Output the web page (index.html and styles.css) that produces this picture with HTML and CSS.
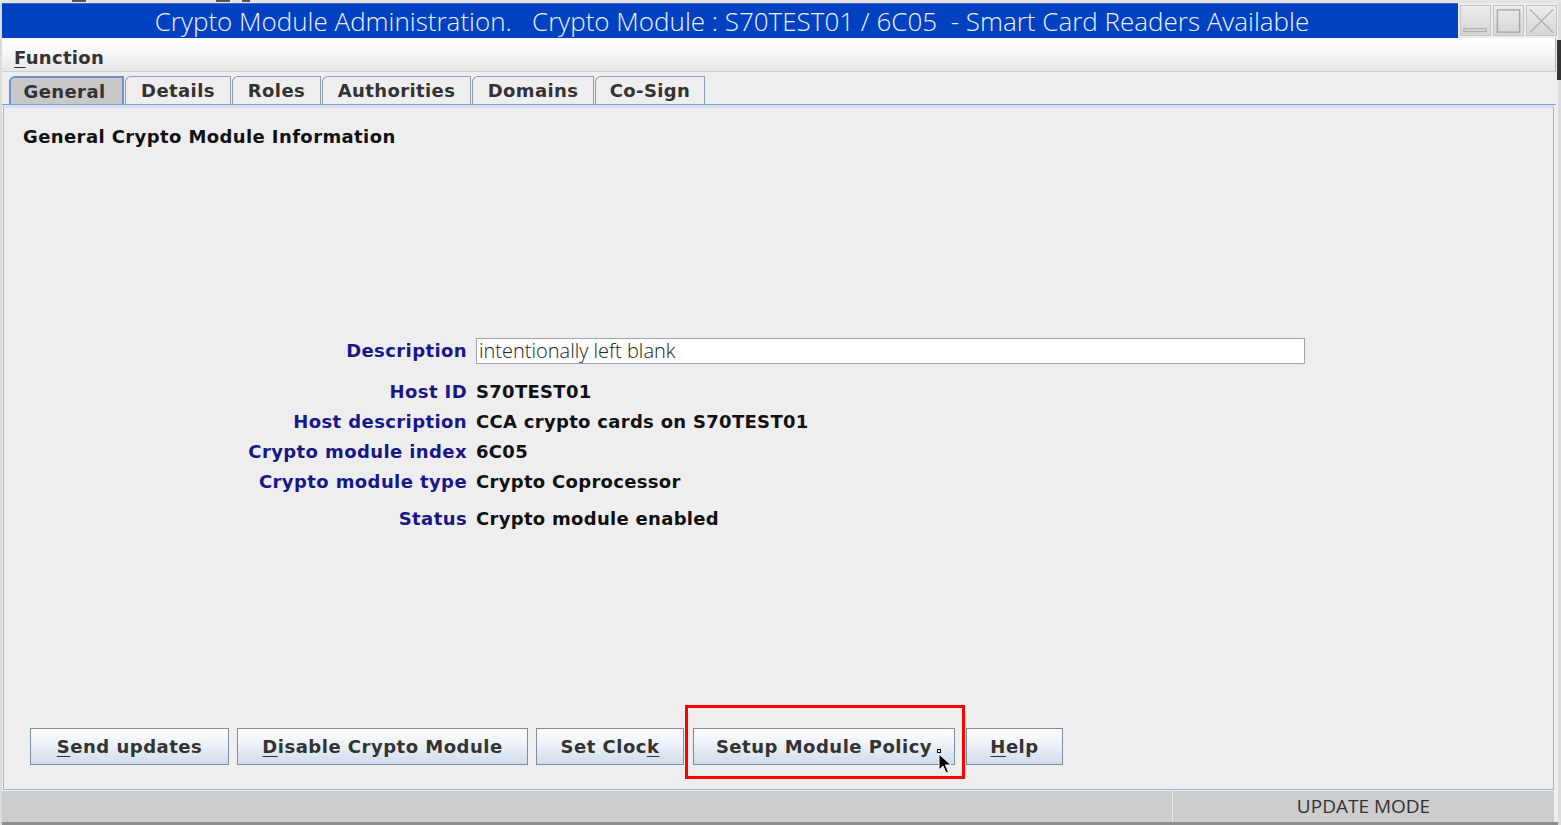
FILE: index.html
```html
<!DOCTYPE html>
<html lang="en">
<head>
<meta charset="utf-8">
<title>Crypto Module Administration</title>
<link rel="stylesheet" href="styles.css">
</head>
<body>
<div class="screen">
  <div class="topstrip"><span class="ghost g1"></span><span class="ghost g2"></span><span class="ghost g3"></span></div>
  <div class="window">
    <div class="titlebar">
      <div class="title">Crypto Module Administration.   Crypto Module : S70TEST01 / 6C05  - Smart Card Readers Available</div>
      <div class="winbtns">
        <span class="winbtn"><svg width="30" height="30" viewBox="0 0 30 30"><rect x="3" y="23" width="23" height="3" fill="none" stroke="#a8a8a8" stroke-width="1"/></svg></span>
        <span class="winbtn"><svg width="30" height="30" viewBox="0 0 30 30"><rect x="3.5" y="3.5" width="23" height="23" fill="none" stroke="#a8a8a8" stroke-width="1.5"/></svg></span>
        <span class="winbtn"><svg width="30" height="30" viewBox="0 0 30 30"><path d="M3 3 L27 27 M27 3 L3 27" stroke="#a8a8a8" stroke-width="1.2" fill="none"/></svg></span>
      </div>
    </div>
    <div class="menubar"><span class="menu"><u>F</u>unction</span></div>
    <div class="tabs">
      <span class="tab selected">General</span>
      <span class="tab">Details</span>
      <span class="tab">Roles</span>
      <span class="tab">Authorities</span>
      <span class="tab">Domains</span>
      <span class="tab">Co-Sign</span>
    </div>
    <div class="panel">
      <h1 class="heading">General Crypto Module Information</h1>
      <div class="form">
        <label class="lbl desc-row">Description</label>
        <div class="val desc-row"><div class="input">intentionally left blank</div></div>
        <span class="lbl">Host ID</span><span class="val">S70TEST01</span>
        <span class="lbl">Host description</span><span class="val">CCA crypto cards on S70TEST01</span>
        <span class="lbl">Crypto module index</span><span class="val">6C05</span>
        <span class="lbl">Crypto module type</span><span class="val">Crypto Coprocessor</span>
        <span class="lbl status-row">Status</span><span class="val status-row">Crypto module enabled</span>
      </div>
      <div class="buttons">
        <button class="btn w-send"><u>S</u>end updates</button>
        <button class="btn w-disable"><u>D</u>isable Crypto Module</button>
        <button class="btn w-clock">Set Cloc<u>k</u></button>
        <span class="highlight-wrap">
          <button class="btn w-policy">Setup Module Policy</button>
          <span class="highlight"></span>
          <svg class="cursor" width="18" height="26" viewBox="0 0 18 26">
            <rect x="0.5" y="0.5" width="3" height="3" fill="#fff" stroke="#000" stroke-width="1"/>
            <path d="M2 5 L2 21 L6 17 L9 24 L11.5 23 L8.5 16 L14 16 Z" fill="#000" stroke="#fff" stroke-width="1"/>
          </svg>
        </span>
        <button class="btn w-help"><u>H</u>elp</button>
      </div>
    </div>
    <div class="statusbar">
      <div class="status-left"></div>
      <div class="status-right">UPDATE MODE</div>
    </div>
  </div>
  <span class="edge"></span>
</div>
</body>
</html>
```
FILE: styles.css
```css
* { box-sizing: border-box; }
html, body { margin: 0; padding: 0; }
body {
  width: 1561px;
  height: 825px;
  overflow: hidden;
  background: #dcdcdc;
  font-family: "DejaVu Sans", "Liberation Sans", sans-serif;
}
.screen {
  position: relative;
  display: flex;
  flex-direction: column;
  height: 825px;
}
.edge {
  position: absolute;
  right: 0;
  top: 40px;
  width: 4px;
  height: 40px;
  background: #333;
}
.topstrip {
  height: 3px;
  background: #e4e4e4;
  display: flex;
}
.ghost { height: 2px; background: #555; }
.g1 { width: 14px; margin-left: 72px; }
.g2 { width: 14px; margin-left: 130px; }
.g3 { width: 8px; margin-left: 12px; }
.window {
  flex: 1;
  display: flex;
  flex-direction: column;
  margin: 0 3px 0 2px;
  border-bottom: 3px solid #8e8e8e;
  background: #eeeeee;
}
.titlebar {
  height: 35px;
  display: flex;
  background: #ececec;
}
.title {
  flex: 1;
  background: #0041c2;
  color: #eef2ff;
  font-family: "Open Sans", "DejaVu Sans", sans-serif;
  font-weight: 300;
  font-size: 26px;
  line-height: 34px;
  text-align: center;
  white-space: pre;
  padding-left: 4px;
  border-top: 1px solid #3a6ad0;
}
.winbtns {
  display: flex;
  gap: 2px;
  padding: 2px 0 0 2px;
  width: 100px;
}
.winbtn {
  width: 31px;
  height: 31px;
  background: linear-gradient(#ececec, #d6d6d6);
  border: 1px solid #c4c4c4;
  display: flex;
  align-items: center;
  justify-content: center;
}
.menubar {
  height: 34px;
  background: linear-gradient(#ffffff, #f6f6f6 50%, #e6e6e6);
  border-bottom: 1px solid #cfcfcf;
  border-right: 1px solid #b0b0b0;
  display: flex;
  align-items: center;
  padding: 5px 0 0 12px;
  margin-right: 2px;
}
.menu {
  font-weight: bold;
  font-size: 18px;
  letter-spacing: 0.3px;
  color: #333;
}
.menu u { text-decoration-thickness: 1px; text-underline-offset: 3px; }
.tabs {
  height: 33px;
  display: flex;
  align-items: flex-end;
  padding-left: 7px;
  border-bottom: 1px solid #7f9fd4;
  margin-right: 2px;
}
.tab {
  height: 28px;
  display: flex;
  align-items: center;
  justify-content: center;
  font-weight: bold;
  font-size: 18px;
  letter-spacing: 0.4px;
  color: #333;
  border: 1px solid #8d9cb0;
  border-bottom: none;
  border-radius: 6px 0 0 0;
  margin-right: 1px;
  background: #eeeeee;
}
.tab:nth-child(1) { width: 115px; padding-right: 4px; }
.tab:nth-child(2) { width: 106px; }
.tab:nth-child(3) { width: 89px; }
.tab:nth-child(4) { width: 149px; }
.tab:nth-child(5) { width: 122px; }
.tab:nth-child(6) { width: 110px; }
.tab.selected {
  background: #c8c8c8;
  border-color: #6f8fc8;
  border-width: 2px 2px 0 2px;
}
.panel {
  flex: 1;
  display: flex;
  flex-direction: column;
  margin: 0 4px 0 1px;
  border: 1px solid #9db3d6;
  border-top: 3px solid #d6e2f0;
  padding: 14px 0 0 19px;
}
.heading {
  margin: 0;
  font-size: 18px;
  font-weight: bold;
  letter-spacing: 0.4px;
  color: #111;
  line-height: 30px;
}
.form {
  display: grid;
  grid-template-columns: 444px 829px;
  column-gap: 9px;
  margin-top: 186px;
  align-items: center;
}
.lbl {
  text-align: right;
  font-weight: bold;
  font-size: 18px;
  letter-spacing: 0.4px;
  color: #17178a;
  height: 30px;
  line-height: 30px;
}
.val {
  font-weight: bold;
  font-size: 18px;
  letter-spacing: 0.3px;
  color: #111;
  height: 30px;
  line-height: 30px;
}
.desc-row { height: 26px; line-height: 26px; margin-bottom: 13px; }
.status-row { margin-top: 7px; }
.input {
  height: 26px;
  background: #fff;
  border: 1px solid #9aa6b4;
  font-family: "Open Sans", "DejaVu Sans", sans-serif;
  font-weight: 300;
  font-size: 20px;
  letter-spacing: 0;
  line-height: 24px;
  padding-left: 2px;
  color: #222;
}
.buttons {
  display: flex;
  align-items: flex-start;
  margin-top: 194px;
  padding-left: 7px;
}
.btn {
  height: 37px;
  border: 1px solid #7d8ea2;
  background: linear-gradient(#ffffff, #eef3f9 40%, #cfdcea);
  font-family: "DejaVu Sans", "Liberation Sans", sans-serif;
  font-weight: bold;
  font-size: 18px;
  letter-spacing: 0.5px;
  color: #333;
  padding: 0;
  cursor: default;
}
.btn u { text-underline-offset: 3px; text-decoration-thickness: 1px; }
.w-send { width: 199px; margin-right: 8px; }
.w-disable { width: 291px; margin-right: 8px; }
.w-clock { width: 148px; margin-right: 9px; }
.w-policy { width: 262px; }
.w-help { width: 97px; }
.highlight-wrap {
  position: relative;
  display: inline-flex;
  margin-right: 11px;
}
.highlight {
  position: absolute;
  left: -8px;
  right: -10px;
  top: -23px;
  bottom: -14px;
  border: 3px solid #ff0000;
  pointer-events: none;
}
.cursor {
  position: absolute;
  left: 244px;
  top: 21px;
}
.statusbar {
  height: 32px;
  display: flex;
  background: #cdcdcd;
  border-top: 1px solid #e8eef6;
  margin-right: 4px;
}
.status-left {
  width: 1171px;
  border-right: 1px solid #dfe8f4;
}
.status-right {
  flex: 1;
  text-align: center;
  font-family: "Open Sans", "DejaVu Sans", sans-serif;
  font-size: 19px;
  color: #333;
  line-height: 31px;
}
```
